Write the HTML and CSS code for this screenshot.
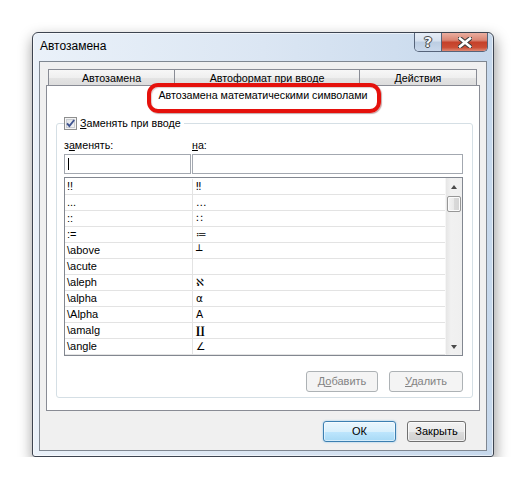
FILE: index.html
```html
<!DOCTYPE html>
<html lang="ru">
<head>
<meta charset="utf-8">
<title>Автозамена</title>
<link rel="stylesheet" href="styles.css">
</head>
<body>
<div class="stage">
  <div class="window">
    <div class="titlebar">
      <span class="title">Автозамена</span>
      <div class="caption-btns">
        <span class="cbtn help">?</span>
        <span class="cbtn close">
          <svg width="14" height="11" viewBox="0 0 14 11">
            <path d="M2 1.5 L12 9.5 M12 1.5 L2 9.5" stroke="#3b3b3b" stroke-width="4.6" stroke-linecap="square" fill="none"/>
            <path d="M2 1.5 L12 9.5 M12 1.5 L2 9.5" stroke="#ffffff" stroke-width="2.6" stroke-linecap="square" fill="none"/>
          </svg>
        </span>
      </div>
    </div>
    <div class="frame">
      <div class="client">
        <div class="tabs">
          <span class="tab t1">Автозамена</span>
          <span class="tab t2">Автоформат при вводе</span>
          <span class="tab t3">Действия</span>
        </div>
        <div class="panel">
          <div class="seltab">Автозамена математическими символами</div>
          <div class="mark"></div>
          <div class="group">
            <div class="legend">
              <span class="check">
                <svg width="13" height="13" viewBox="0 0 13 13">
                  <path d="M3 6.3 L5.4 9 L10.2 3" stroke="#3f5490" stroke-width="1.9" fill="none"/>
                </svg>
              </span>
              <span class="legend-text"><u>З</u>аменять при вводе</span>
            </div>
            <div class="fields">
              <span class="label">з<u>а</u>менять:</span>
              <span class="label"><u>н</u>а:</span>
              <div class="input"><span class="caret"></span></div>
              <div class="input"></div>
            </div>
            <div class="list">
              <div class="rows">
                <div class="row"><span class="c1">!!</span><span class="c2">‼</span></div>
                <div class="row"><span class="c1">...</span><span class="c2">…</span></div>
                <div class="row"><span class="c1">::</span><span class="c2">∷</span></div>
                <div class="row"><span class="c1">:=</span><span class="c2">≔</span></div>
                <div class="row"><span class="c1">\above</span><span class="c2">┴</span></div>
                <div class="row"><span class="c1">\acute</span><span class="c2"></span></div>
                <div class="row"><span class="c1">\aleph</span><span class="c2">ℵ</span></div>
                <div class="row"><span class="c1">\alpha</span><span class="c2">α</span></div>
                <div class="row"><span class="c1">\Alpha</span><span class="c2">Α</span></div>
                <div class="row"><span class="c1">\amalg</span><span class="c2 bold">∐</span></div>
                <div class="row"><span class="c1">\angle</span><span class="c2">∠</span></div>
              </div>
              <div class="scrollbar">
                <div class="sb-btn"><span class="arrow up"></span></div>
                <div class="thumb"></div>
                <div class="sb-track"></div>
                <div class="sb-btn"><span class="arrow down"></span></div>
              </div>
            </div>
            <div class="group-btns">
              <span class="btn disabled add">Д<u>о</u>бавить</span>
              <span class="btn disabled del"><u>У</u>далить</span>
            </div>
          </div>
        </div>
        <div class="dialog-btns">
          <span class="btn ok">ОК</span>
          <span class="btn close-btn">Закрыть</span>
        </div>
      </div>
    </div>
  </div>
</div>
</body>
</html>
```

FILE: styles.css
```css
* { box-sizing: border-box; }
html, body { margin: 0; background: #ffffff; }
body {
  font-family: "Liberation Sans", Arial, sans-serif;
  font-size: 10.7px;
  color: #000;
}
u { text-decoration: underline; text-underline-offset: 1px; }

.stage { padding: 32px 0 0 32px; }

.window {
  width: 462px;
  border: 1px solid #3d4450;
  border-radius: 6px 6px 3px 3px;
  background: linear-gradient(to right, #eaf1f9 0%, #dbe6f3 50%, #c6d8ec 100%);
  box-shadow: 1px 6px 14px 1px rgba(0,0,0,0.38), inset 0 0 0 1px rgba(255,255,255,0.55);
}

.titlebar {
  height: 28px;
  display: flex;
  justify-content: space-between;
  align-items: flex-start;
  padding-left: 7px;
}
.title {
  margin-top: 6px;
  font-size: 12px;
  line-height: 15px;
}
.caption-btns {
  display: flex;
  margin-right: 5px;
  height: 19px;
  border: 1px solid #56647a;
  border-top: 0;
  border-radius: 0 0 5px 5px;
  overflow: hidden;
}
.cbtn {
  display: flex;
  align-items: center;
  justify-content: center;
  height: 100%;
}
.help {
  width: 27px;
  border-right: 1px solid #56647a;
  background: linear-gradient(#e6edf6 0%, #d6e1ef 45%, #bccde2 50%, #c9d8eb 100%);
  color: #f4f7fb;
  font-weight: bold;
  font-size: 14px;
  font-family: "DejaVu Sans", sans-serif;
  text-shadow: 0 0 1px #333, 0 0 1px #333, 1px 0 0 #555, -1px 0 0 #555, 0 1px 0 #555, 0 -1px 0 #555;
}
.close {
  width: 45px;
  background: linear-gradient(#eaaea0 0%, #d98573 40%, #c5412a 52%, #cb4d34 80%, #de8a75 100%);
}

.frame { padding: 0 6px 5px 6px; }

.client {
  height: 390px;
  background: #f0f0f0;
  border: 1px solid #7f8791;
  padding: 7px 6px 8px 6px;
  display: flex;
  flex-direction: column;
}

.tabs {
  display: flex;
  height: 16px;
  padding-left: 2px;
}
.tab {
  height: 16px;
  border: 1px solid #898c95;
  border-bottom: 0;
  background: linear-gradient(#f7f7f7 0%, #efefef 50%, #e4e4e4 51%, #dddddd 100%);
  text-align: center;
  line-height: 15px;
  padding-top: 1px;
}
.tab + .tab { margin-left: -1px; }
.t1 { width: 127px; }
.t2 { width: 186px; }
.t3 { width: 118px; }

.panel {
  position: relative;
  height: 326px;
  background: #ffffff;
  border: 1px solid #898c95;
}
.seltab {
  text-align: center;
  line-height: 15px;
  padding-top: 2px;
  height: 17px;
}
.mark {
  position: absolute;
  left: 100px;
  top: -3px;
  width: 234px;
  height: 30px;
  border: 4px solid #e5110c;
  border-radius: 11px;
  box-shadow: 1px 1px 1px rgba(90,0,0,0.35), inset 1px 1px 1px rgba(90,0,0,0.2);
}

.group {
  margin: 20px 6px 0 9px;
  border: 1px solid #d5dfe5;
  border-radius: 3px;
  padding: 0 9px 5px 7px;
}
.legend {
  margin-top: -7px;
  display: flex;
  align-items: center;
  width: max-content;
  background: #ffffff;
  padding-right: 3px;
  height: 13px;
}
.check {
  width: 13px;
  height: 13px;
  border: 1px solid #8e8f8f;
  background: linear-gradient(135deg, #dcdfe3, #f8f8f8);
  box-shadow: inset 0 0 0 1px #f4f4f4, inset 0 0 0 2px #c9ccd1;
  display: flex;
}
.check svg { margin: -1px; }
.legend-text { margin-left: 3px; line-height: 13px; }

.fields {
  margin-top: 8px;
  display: grid;
  grid-template-columns: 127px 1fr;
  column-gap: 1px;
  row-gap: 2px;
}
.label { line-height: 14px; }
.input {
  height: 20px;
  border: 1px solid #a3a8b0;
  background: #fff;
  padding: 3px 0 0 3px;
}
.caret {
  display: block;
  width: 1px;
  height: 12px;
  background: #000;
}

.list {
  margin-top: 3px;
  height: 179px;
  border: 1px solid #828790;
  display: flex;
}
.rows {
  flex: 1;
  padding-top: 1px;
}
.row {
  display: grid;
  grid-template-columns: 128px 1fr;
  height: 16px;
  border-bottom: 1px solid #e3e3e3;
  font-size: 11px;
  line-height: 15px;
}
.c1 {
  padding-left: 2px;
  border-right: 1px solid #e3e3e3;
}
.c2 {
  padding-left: 3px;
  font-family: "DejaVu Sans", sans-serif;
  font-size: 10.5px;
}
.c2.bold { font-family: "DejaVu Serif", serif; font-weight: bold; }

.scrollbar {
  width: 17px;
  display: flex;
  flex-direction: column;
  background: linear-gradient(to right, #e6e6e6, #f1f1f1 30%, #efefef 100%);
  border-left: 1px solid #f6f6f6;
}
.sb-btn {
  height: 17px;
  display: flex;
  align-items: center;
  justify-content: center;
}
.arrow {
  width: 0;
  height: 0;
  border-left: 3px solid transparent;
  border-right: 3px solid transparent;
}
.arrow.up { border-bottom: 4px solid #4a4a4a; margin-top: 1px; }
.arrow.down { border-top: 4px solid #4a4a4a; }
.thumb {
  height: 16px;
  margin: 1px 1px 0 1px;
  border: 1px solid #979797;
  border-radius: 2px;
  background: linear-gradient(to right, #f4f4f4, #e9e9e9 50%, #d9d9d9 51%, #d4d4d4);
  box-shadow: inset 0 0 0 1px #fbfbfb;
}
.sb-track { flex: 1; }

.group-btns {
  margin-top: 15px;
  display: flex;
  justify-content: flex-end;
  gap: 11px;
}
.btn {
  height: 21px;
  line-height: 19px;
  text-align: center;
  border: 1px solid #707070;
  border-radius: 3px;
  background: linear-gradient(#f2f2f2 0%, #ebebeb 50%, #dddddd 51%, #cfcfcf 100%);
  box-shadow: inset 0 0 0 1px rgba(255,255,255,0.7);
  font-size: 11px;
}
.btn.disabled {
  border-color: #adb2b5;
  background: #f4f4f4;
  color: #838383;
  box-shadow: none;
}
.add { width: 72px; }
.del { width: 74px; }

.dialog-btns {
  margin-top: 10px;
  margin-right: 14px;
  display: flex;
  justify-content: flex-end;
  gap: 11px;
}
.ok {
  width: 73px;
  border-color: #3c7fb1;
  background: linear-gradient(#eaf6fd 0%, #d9f0fc 50%, #bee6fd 51%, #a7d9f5 100%);
  box-shadow: inset 0 0 0 1px rgba(255,255,255,0.5), 0 0 2px rgba(60,160,230,0.6);
}
.close-btn { width: 59px; }
```
